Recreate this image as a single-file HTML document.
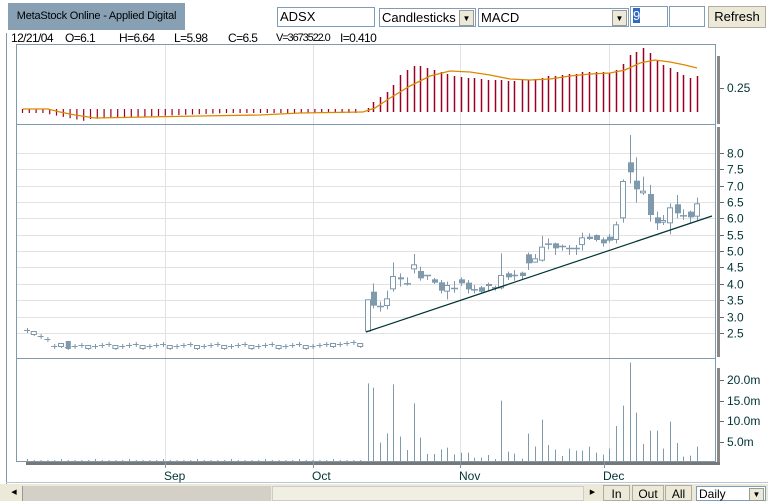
<!DOCTYPE html>
<html><head><meta charset="utf-8"><style>
body{margin:0;width:768px;height:501px;overflow:hidden;background:#fff;font-family:"Liberation Sans",sans-serif;position:relative}
.a{position:absolute}
.top{left:0;top:0;width:768px;height:33px;background:#fff}
.title{left:8px;top:3px;width:177px;height:27px;background:#87a0b3;font-size:11px;color:#000;text-align:center;line-height:27px;white-space:nowrap;letter-spacing:-0.2px}
.inp{background:#fff;border:1px solid #7f9db9;height:20px;box-sizing:border-box;font-size:13px;line-height:18px;padding-left:2px}
.dd{position:absolute;right:1px;top:1px;width:15px;height:16px;background:#ece9d8;border:1px solid #999;box-sizing:border-box;font-size:8px;text-align:center;line-height:15px}
.btn{background:#ece9d8;border:1px solid #b0ada0;box-sizing:border-box;font-size:13px;text-align:center}
.info{top:31px;font-size:12px;font-family:"Liberation Sans Narrow","Liberation Sans",sans-serif;letter-spacing:-0.6px;color:#000;white-space:nowrap}
</style></head><body>
<div class="a top"></div>
<div class="a title">MetaStock Online - Applied Digital</div>
<div class="a inp" style="left:277px;top:7px;width:98px">ADSX</div>
<div class="a inp" style="left:379px;top:8px;width:97px;height:19px">Candlesticks<div class="dd">▼</div></div>
<div class="a inp" style="left:478px;top:8px;width:151px;height:19px">MACD<div class="dd">▼</div></div>
<div class="a inp" style="left:630px;top:6px;width:38px;height:21px"><span style="background:#316ac5;color:#fff">9</span></div>
<div class="a inp" style="left:669px;top:6px;width:36px;height:21px"></div>
<div class="a btn" style="left:708px;top:6px;width:58px;height:22px;line-height:20px">Refresh</div>
<div class="a info" style="left:11px">12/21/04</div>
<div class="a info" style="left:65px">O=6.1</div>
<div class="a info" style="left:119px">H=6.64</div>
<div class="a info" style="left:174px">L=5.98</div>
<div class="a info" style="left:228px">C=6.5</div>
<div class="a info" style="left:276px;top:32px;font-size:11px;letter-spacing:-1.1px">V=3673522.0</div>
<div class="a info" style="left:340px">I=0.410</div>
<svg class="a" style="left:0;top:0" width="768" height="501" id="s">
<g id="g"></g>
</svg>
<div class="a" style="left:0;top:484px;width:768px;height:17px;background:#ece9d8"></div>
<div class="a" style="left:6px;top:486px;width:16px;height:15px;background:#ece9d8;border-right:1px solid #999;font-size:7px;text-align:center;line-height:14px">◀</div>
<div class="a" style="left:23px;top:486px;width:248px;height:15px;background:#d4d0c8"></div>
<div class="a" style="left:272px;top:486px;width:312px;height:15px;background:#f1efe2;border:1px solid #ccc;box-sizing:border-box"></div>
<div class="a" style="left:585px;top:486px;width:15px;height:15px;background:#ece9d8;font-size:7px;text-align:center;line-height:14px">▶</div>
<div class="a btn" style="left:603px;top:485px;width:27px;height:16px;line-height:16px;font-size:12px">In</div>
<div class="a btn" style="left:632px;top:485px;width:32px;height:16px;line-height:16px;font-size:12px">Out</div>
<div class="a btn" style="left:665px;top:485px;width:27px;height:16px;line-height:16px;font-size:12px">All</div>
<div class="a inp" style="left:696px;top:486px;width:70px;height:15px;font-size:12px;line-height:14px">Daily<div class="dd" style="height:13px;line-height:12px">▼</div></div>
<script>
var g=document.getElementById('g'),h='';
function L(x1,y1,x2,y2,c,w){h+='<line x1="'+x1+'" y1="'+y1+'" x2="'+x2+'" y2="'+y2+'" stroke="'+c+'" stroke-width="'+(w||1)+'"/>';}
function R(x,y,w,hh,f,s){h+='<rect x="'+x+'" y="'+y+'" width="'+w+'" height="'+hh+'" fill="'+f+'"'+(s?' stroke="'+s+'"':'')+'/>';}
function T(x,y,t){h+='<text x="'+x+'" y="'+y+'" font-size="12" fill="#033" font-family="Liberation Sans">'+t+'</text>';}
var B='#7f99ad',G='#e2e2e2';
L(6.5,33,6.5,484,B);L(6,482.5,768,482.5,'#b7c6d2');
R(16,44,700,418,'#fff');
[165,313,460,609].forEach(function(x){L(x+.5,44,x+.5,462,G);});
function py(p){return 153+(8-p)*32.7;}
for(var p=2.5;p<=8.01;p+=0.5){var y=Math.round(py(p))+.5;L(16,y,716,y,G);L(717,y,724,y,'#666');T(727,y+4,p.toFixed(1));}
[[380,'20.0m'],[401,'15.0m'],[421,'10.0m'],[442,'5.0m']].forEach(function(a){L(717,a[0]+.5,724,a[0]+.5,'#666');T(727,a[0]+4,a[1]);});
L(717,88.5,724,88.5,'#666');T(727,92,'0.25');
R(16.5,44.5,699,417,'none',B);
L(16,124.5,716,124.5,B);L(16,358.5,716,358.5,B);
R(717,56,3,68,'#888');R(717,127,3,230,'#888');R(717,368,3,97,'#888');R(26,462,694,3,'#777');
[[165,'Sep'],[313,'Oct'],[460,'Nov'],[604,'Dec']].forEach(function(a){L(a[0]+.5,462,a[0]+.5,468,B);T(a[0]-1,480,a[1]);});
var C='#7f99ad';
for(var i=0;i<50;i++){var x=27+i*6.8;var base=i<4?330+i*3:i<10?347-(i%3):344+((i*7)%4)-(i>44?2:0);
 L(x-3,base+.5,x+3,base+.5,C);L(x+.5,base-2,x+.5,base+3,C);
 if(i%4==1)R(x-2.5,base-1.5,5,3,'#fff',C); if(i==6)R(x-2,base-6,5,8,C);}
for(var i=0;i<50;i++){var x=27+i*6.8;L(x+.5,i%5==0?459:460,x+.5,462,C);}
var cd=[[83,538,635,538,635,0],[98,515,557,490,565,1],[120,558,563,545,575,1],[142,535,558,512,568,0],[160,468,508,427,515,0],[180,472,478,460,500,1],[200,490,494,472,497,1],[223,433,448,402,460,0],[240,453,475,440,482,1],[260,465,468,465,480,1],[282,478,488,474,492,1],[302,487,512,480,520,1],[322,495,515,485,538,0],[342,504,506,483,518,1],[362,478,490,472,498,1],[383,488,508,480,520,1],[402,508,512,495,520,1],[422,502,515,498,520,1],[443,492,498,488,512,1],[465,502,504,497,512,1],[483,465,505,400,508,0],[503,460,472,455,480,1],[523,465,470,450,482,1],[545,458,468,455,478,1],[563,403,430,398,450,1],[585,415,428,402,428,0],[605,380,422,348,425,0],[625,371,373,355,388,1],[645,370,385,368,405,1],[665,378,383,374,392,1],[687,384,386,375,405,1],[707,384,386,375,405,1],[727,352,375,338,392,0],[747,350,357,340,360,1],[767,345,360,343,365,1],[788,358,370,352,380,1],[807,350,362,342,368,1],[828,313,360,305,370,0],[850,183,295,178,308,0],[870,127,157,45,190,1],[887,182,208,112,248,1],[910,212,220,170,225,0],[930,222,285,195,305,1],[950,292,310,275,330,1],[970,300,308,285,315,0],[990,262,310,250,343,0],[1010,253,280,225,295,1],[1030,286,288,268,300,1],[1050,275,292,272,310,1],[1072,250,290,233,300,0]];
var vol=[100,113,278,250,103,260,300,160,263,312,312,298,293,313,308,308,323,323,315,327,152,305,311,326,251,290,209,285,299,318,296,302,302,290,308,314,296,228,167,38,188,282,242,242,296,215,279,320,317,290];
cd.forEach(function(c,i){var x=Math.round(340+c[0]/3);var f=function(v){return 120+v/3;};
 L(x+.5,f(c[3]),x+.5,f(c[4]),C);
 var t=f(c[1]),b=f(c[2]);if(b-t<2){L(x-3,t+.5,x+4,t+.5,C,1.5);}
 else if(c[5])R(x-2,t,6,b-t,C);else R(x-2.5,t+.5,5,b-t-1,'#fff',C);
 L(x+.5,350+vol[i]/3,x+.5,462,C);
});
L(366,332,712,216,'#033',1.2);
for(var i=0;i<50;i++){var x=22+i*6.8;
 L(x+.5,109,x+.5,i<4?113:Math.min(121,113+(i<10?(i-3)*1.3:Math.max(0,6-(i-10)*0.3))),'#990022',1.2);}
var pts='23,109 48,109 60,112 75,115 95,118 145,117 200,116 260,115 300,113 362,112';
var hist=[108,102,97,92,85,75,70,66,66,68,70,72,74,76,77,78,78,79,80,80,80,81,81,80,80,79,78,76,76,75,74,74,72,72,72,72,73,70,64,55,52,48,53,60,65,68,72,75,78,76];
hist.forEach(function(t,i){var x=Math.round(340+cd[i][0]/3);L(x+.5,t,x+.5,112,'#990022',1.5);});
var lp=[[363,112],[375,108],[390,98],[410,86],[430,76],[450,71],[470,72],[490,75],[510,79],[530,80],[550,79],[570,76],[590,74],[610,73],[625,70],[640,63],[655,60],[670,62],[685,65],[697,68]];
h+='<polyline fill="none" stroke="#dd8800" stroke-width="1.3" points="'+pts+' '+lp.map(function(a){return a.join(',');}).join(' ')+'"/>';
g.innerHTML=h;
</script>
</body></html>
